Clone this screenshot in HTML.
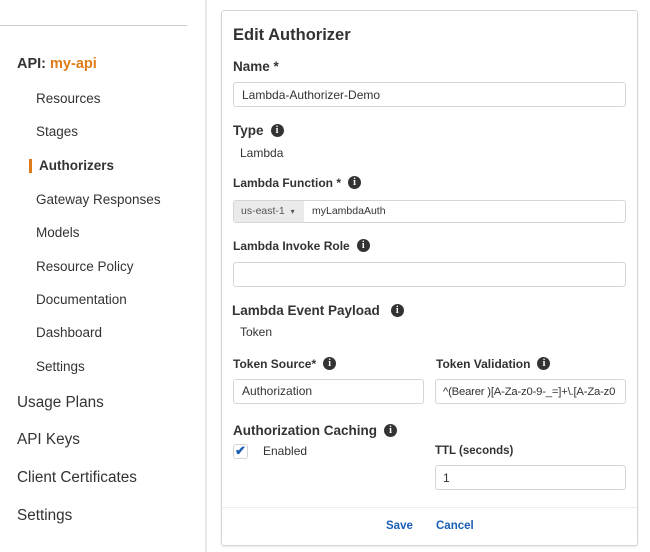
<!DOCTYPE html>
<html><head><style>
body{margin:0;width:650px;height:552px;background:#fff;position:relative;overflow:hidden;font-family:"Liberation Sans",Arial,sans-serif;color:#333}
.a{position:absolute;line-height:20px;white-space:nowrap}
.s{font-size:13.5px;left:36px;color:#333}
.t{font-size:15.3px;left:17px;color:#333}
.b{font-weight:bold;color:#333}
.inp{position:absolute;border:1px solid #d5d5d5;border-radius:3px;background:#fff;box-sizing:border-box}
.i{display:inline-block;position:relative;top:-3px;vertical-align:-1px;width:13px;height:13px;border-radius:50%;background:#333;color:#fff;font:bold 10px/13px "Liberation Serif",serif;text-align:center;margin-left:7px}
</style></head><body>
<div style="position:absolute;left:0;top:25px;width:187px;height:1px;background:#ccc"></div>
<div style="position:absolute;left:205px;top:0;width:2px;height:552px;background:#e8e8e8"></div>

<div class="a b" style="left:17px;top:54px;font-size:14.5px">API: <span style="color:#e07b1a">my-api</span></div>
<div class="a s" style="top:89px">Resources</div>
<div class="a s" style="top:122px">Stages</div>
<div style="position:absolute;left:29px;top:159px;width:3px;height:14px;background:#e07b1a"></div>
<div class="a s b" style="top:156px;left:39px">Authorizers</div>
<div class="a s" style="top:190px">Gateway Responses</div>
<div class="a s" style="top:223px">Models</div>
<div class="a s" style="top:257px">Resource Policy</div>
<div class="a s" style="top:290px">Documentation</div>
<div class="a s" style="top:323px">Dashboard</div>
<div class="a s" style="top:357px">Settings</div>
<div class="a t" style="top:393px">Usage Plans</div>
<div class="a t" style="top:430px">API Keys</div>
<div class="a t" style="top:468px">Client Certificates</div>
<div class="a t" style="top:506px">Settings</div>

<div style="position:absolute;left:221px;top:10px;width:417px;height:536px;border:1px solid #d5d5d5;border-radius:3px;box-sizing:border-box;box-shadow:0 1px 2px rgba(0,0,0,.1)"></div>
<div style="position:absolute;left:222px;top:507px;width:415px;height:1px;background:#eee"></div>

<div class="a b" style="left:233px;top:25px;font-size:16.5px">Edit Authorizer</div>
<div class="a b" style="left:233px;top:57px;font-size:13.5px">Name *</div>
<div class="inp" style="left:233px;top:82px;width:393px;height:25px"></div>
<div class="a" style="left:242px;top:85px;font-size:12px">Lambda-Authorizer-Demo</div>
<div class="a b" style="left:233px;top:121px;font-size:13.5px">Type<span class="i">i</span></div>
<div class="a" style="left:240px;top:143px;font-size:12px">Lambda</div>

<div class="a b" style="left:233px;top:173px;font-size:12px">Lambda Function *<span class="i">i</span></div>
<div class="inp" style="left:233px;top:200px;width:393px;height:23px"></div>
<div style="position:absolute;left:234px;top:201px;width:70px;height:21px;background:#eaeaea"></div>
<div class="a" style="left:241px;top:201px;font-size:10.5px;color:#555">us-east-1 &nbsp;<span style="font-size:8px">▾</span></div>
<div class="a" style="left:312px;top:201px;font-size:10.5px">myLambdaAuth</div>

<div class="a b" style="left:233px;top:236px;font-size:12px">Lambda Invoke Role<span class="i">i</span></div>
<div class="inp" style="left:233px;top:262px;width:393px;height:25px"></div>

<div class="a b" style="left:232px;top:301px;font-size:13.5px">Lambda Event Payload<span class="i" style="margin-left:11px">i</span></div>
<div class="a" style="left:240px;top:322px;font-size:12px">Token</div>

<div class="a b" style="left:233px;top:354px;font-size:12px">Token Source*<span class="i">i</span></div>
<div class="a b" style="left:436px;top:354px;font-size:12px">Token Validation<span class="i">i</span></div>
<div class="inp" style="left:233px;top:379px;width:191px;height:25px"></div>
<div class="a" style="left:242px;top:381px;font-size:12px">Authorization</div>
<div class="inp" style="left:435px;top:379px;width:191px;height:25px;overflow:hidden"><div class="a" style="left:7px;top:2px;font-size:11.3px;letter-spacing:-0.2px">^(Bearer )[A-Za-z0-9-_=]+\.[A-Za-z0</div></div>

<div class="a b" style="left:233px;top:421px;font-size:13.5px">Authorization Caching<span class="i">i</span></div>
<div class="inp" style="left:233px;top:444px;width:15px;height:15px;border-radius:3px"></div>
<div class="a" style="left:235px;top:441px;font-size:13px;color:#1a5fb4;font-weight:bold">✔</div>
<div class="a" style="left:263px;top:441px;font-size:12px">Enabled</div>
<div class="a b" style="left:435px;top:441px;font-size:11.5px">TTL (seconds)</div>
<div class="inp" style="left:435px;top:465px;width:191px;height:25px"></div>
<div class="a" style="left:443px;top:468px;font-size:12px">1</div>

<div class="a b" style="left:386px;top:516px;font-size:11.5px;color:#1a5fb4">Save</div>
<div class="a b" style="left:436px;top:516px;font-size:11.5px;color:#1a5fb4">Cancel</div>
</body></html>
